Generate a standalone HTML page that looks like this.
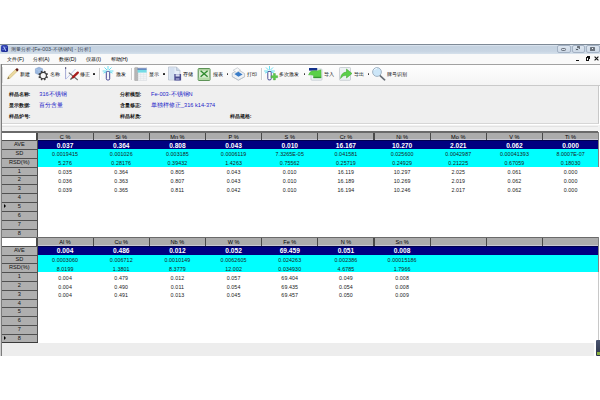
<!DOCTYPE html>
<html><head><meta charset="utf-8">
<style>
html,body{margin:0;padding:0;background:#fff;}
#root{position:relative;width:600px;height:400px;overflow:hidden;background:#fff;font-family:"Liberation Sans",sans-serif;}
.abs{position:absolute;box-sizing:border-box;white-space:nowrap;}
.hdr{background:#acacac;border-bottom:0.8px solid #c8c8d4;}
.ht{text-align:center;font-size:5.6px;color:#000;}
.rh{background:#afafaf;border-top:1px solid #505050;border-right:1.2px solid #505050;text-align:center;font-size:5.6px;color:#111;}
.av{text-align:center;font-size:6.6px;font-weight:bold;color:#fff;}
.dt{text-align:center;font-family:"Liberation Sans",sans-serif;font-size:5.3px;color:#1a1a1a;letter-spacing:0.1px;}
.arrow{width:0;height:0;border-top:2.1px solid transparent;border-bottom:2.1px solid transparent;border-left:2.8px solid #000;}
.menu{font-size:5.3px;color:#000;font-weight:500;}
.tb{font-size:5.3px;color:#000;font-weight:500;}
.lbl{font-size:5.4px;color:#1a1a1a;font-weight:bold;}
.val{font-size:5.6px;color:#2424c8;}
.dd{width:1.8px;height:1.8px;background:#1a1a1a;border-radius:0.4px;}
.sep{width:1.5px;height:12px;background:#cecece;border-right:0.5px solid #fff;}
</style></head><body><div id="root">
<!-- title bar -->
<div class="abs" style="left:0;top:43.7px;width:600px;height:10.3px;background:linear-gradient(#dfe8f2 0%,#c4d2e0 18%,#c8d5e3 70%,#d6e1ec 100%);border-top:1px solid #7e8a96"></div>
<div class="abs" style="left:1.2px;top:45px;width:6.6px;height:6.8px;background:linear-gradient(135deg,#3a4cc0,#18268c);border-radius:1.6px"></div>
<svg class="abs" style="left:1px;top:45px" width="7" height="7" viewBox="0 0 7 7"><path d="M2.6 1.6 L4.8 5.8" stroke="#b4c8ff" stroke-width="1.1" fill="none"/><path d="M1.4 4.6 L2.8 4.6 M4.4 2.2 L5.8 2.2" stroke="#8aa4f0" stroke-width="0.7"/></svg>
<div class="abs" style="left:11px;top:45.6px;font-size:5.3px;color:#3c4654">测量分析-[Fe-003-不锈钢N] - [分析]</div>
<div class="abs" style="left:557px;top:44.6px;width:13.5px;height:8.4px;background:linear-gradient(#dde6f0,#ccd8e6);border:0.8px solid #a4b2c4;border-radius:2px"></div>
<div class="abs" style="left:571.5px;top:44.6px;width:13px;height:8.4px;background:linear-gradient(#dde6f0,#ccd8e6);border:0.8px solid #a4b2c4;border-radius:2px"></div>
<div class="abs" style="left:585.5px;top:44.6px;width:14px;height:8.4px;background:linear-gradient(#dde6f0,#ccd8e6);border:0.8px solid #a4b2c4;border-radius:2px"></div>
<div class="abs" style="left:561px;top:48.3px;width:5.4px;height:2.4px;border:0.8px solid #6c7480;border-radius:1.2px;background:#d8e0ea"></div>
<div class="abs" style="left:576.6px;top:46.2px;width:3.6px;height:3px;background:#6a727c;border-radius:0.5px"></div>
<div class="abs" style="left:575px;top:47.6px;width:3.6px;height:3px;background:#58606a;border:0.6px solid #c8d4e0;border-radius:0.5px"></div>
<div class="abs" style="left:590.2px;top:46.6px;width:4.6px;height:4px;background:#6a727c;border-radius:0.6px"></div>
<div class="abs" style="left:591.8px;top:48px;width:1.4px;height:1.3px;background:#f4f8fc"></div>
<!-- menu bar -->
<div class="abs" style="left:0;top:54px;width:600px;height:10.5px;background:#f9f9f9"></div>
<div class="abs menu" style="left:7.3px;top:56.2px">文件(F)</div>
<div class="abs menu" style="left:32.5px;top:56.2px">分析(A)</div>
<div class="abs menu" style="left:59px;top:56.2px">数据(D)</div>
<div class="abs menu" style="left:86px;top:56.2px">仪器(I)</div>
<div class="abs menu" style="left:110.5px;top:56.2px">帮助(H)</div>
<div class="abs" style="left:576px;top:60px;width:3px;height:1.2px;background:#111"></div>
<div class="abs" style="left:585.5px;top:57.2px;width:3.6px;height:3.6px;border:0.9px solid #111;border-top-width:1.4px"></div>
<div class="abs" style="left:586.8px;top:56px;width:3.6px;height:3px;border-top:1px solid #111;border-right:0.9px solid #111"></div>
<svg class="abs" style="left:593.5px;top:56px" width="5" height="5" viewBox="0 0 5 5"><path d="M0.6 0.6 L4.4 4.4 M4.4 0.6 L0.6 4.4" stroke="#111" stroke-width="1.1"/></svg>
<!-- toolbar -->
<div class="abs" style="left:0;top:64.4px;width:600px;height:21.6px;background:linear-gradient(#fefefe,#f4f4f4);border-top:1.5px solid #a2a2a2;border-bottom:0.9px solid #cacaca"></div>
<div class="abs" style="left:1.6px;top:67px;width:1px;height:16px;border-left:1px solid #dadada"></div>
<svg class="abs" style="left:6px;top:67px" width="13" height="14" viewBox="0 0 13 14">
<path d="M1.5 12 L2.5 9.2 L10.2 1.8 L12 3.6 L4.3 11 Z" fill="#ead9a0" stroke="#c8ac60" stroke-width="0.5"/>
<path d="M9.4 2.6 L10.4 1.5 Q11.3 1 12.3 2 Q12.8 3 12 3.7 L11 4.6 Z" fill="#5e1818"/>
<path d="M1.5 12 L2.2 10 L3.6 11.2 Z" fill="#6a5a40"/></svg>
<div class="abs tb" style="left:20.3px;top:70.5px">新建</div>
<svg class="abs" style="left:34px;top:66px" width="15" height="15" viewBox="0 0 15 15">
<path d="M5 1.2 L8.6 2.8 L8.6 7.2 L5 8.8 L1.4 7.2 L1.4 2.8 Z" fill="#9ab8e0" stroke="#7a98c4" stroke-width="0.5"/>
<path d="M1.4 2.8 L5 4.4 L8.6 2.8 M5 4.4 L5 8.8" stroke="#c8d8f0" stroke-width="0.4" fill="none"/>
<g transform="translate(9.2,9.6)"><g fill="#3a3a3a"><rect x="-0.75" y="-4.9" width="1.5" height="1.9" transform="rotate(22.5)"/><rect x="-0.75" y="-4.9" width="1.5" height="1.9" transform="rotate(67.5)"/><rect x="-0.75" y="-4.9" width="1.5" height="1.9" transform="rotate(112.5)"/><rect x="-0.75" y="-4.9" width="1.5" height="1.9" transform="rotate(157.5)"/><rect x="-0.75" y="-4.9" width="1.5" height="1.9" transform="rotate(202.5)"/><rect x="-0.75" y="-4.9" width="1.5" height="1.9" transform="rotate(247.5)"/><rect x="-0.75" y="-4.9" width="1.5" height="1.9" transform="rotate(292.5)"/><rect x="-0.75" y="-4.9" width="1.5" height="1.9" transform="rotate(337.5)"/></g>
<circle r="3.2" fill="#f8f8f8" stroke="#3a3a3a" stroke-width="1.1"/></g></svg>
<div class="abs tb" style="left:50px;top:70.5px">名称</div>
<svg class="abs" style="left:62px;top:64px" width="20" height="20" viewBox="0 0 20 20">
<path d="M3.6 3.8 L3.6 15.2" stroke="#9aa0d0" stroke-width="0.9"/>
<rect x="3" y="3.2" width="1.2" height="1.6" fill="#505070"/>
<path d="M4 15 L13.5 5" stroke="#b8c0e8" stroke-width="0.9"/>
<path d="M6.8 8.6 L15.8 16" stroke="#6a6a6a" stroke-width="1.1"/>
<path d="M10.8 13.4 L15.8 8.6" stroke="#a81c1c" stroke-width="2.3" stroke-linecap="round"/>
<path d="M8.4 15.6 L10.4 13.8" stroke="#585858" stroke-width="1.3"/></svg>
<div class="abs tb" style="left:80px;top:70.5px">修正</div>
<div class="abs dd" style="left:93px;top:73.4px"></div>
<div class="abs sep" style="left:99px;top:68px"></div>
<svg class="abs" style="left:101px;top:65px" width="14" height="16" viewBox="0 0 14 16"><g stroke="#38d4ee" stroke-width="0.75" stroke-linecap="round"><path d="M7.00 4.40 L7.00 1.40"/><path d="M8.13 4.87 L10.25 2.75"/><path d="M5.87 4.87 L3.75 2.75"/><path d="M8.60 6.00 L12.00 6.00"/><path d="M5.40 6.00 L2.00 6.00"/><path d="M8.45 6.68 L11.17 7.94"/><path d="M5.55 6.68 L2.83 7.94"/></g>
<rect x="5.3" y="6.4" width="3.4" height="8.6" rx="1.3" fill="#f4f4fa" stroke="#34368a" stroke-width="0.9"/></svg>
<div class="abs tb" style="left:116px;top:70.5px">激发</div>
<div class="abs sep" style="left:131px;top:68px"></div>
<svg class="abs" style="left:134px;top:66px" width="14" height="15" viewBox="0 0 14 15">
<rect x="3.2" y="1.6" width="9.6" height="13" fill="#f2f4f6" stroke="#d4d8dc" stroke-width="0.5"/>
<rect x="0.6" y="1.4" width="3.2" height="13.4" rx="0.9" fill="#b6b6b6" stroke="#9a9a9a" stroke-width="0.4"/>
<rect x="3.6" y="2.4" width="9" height="1.4" fill="#3c5ca8"/>
<rect x="3.6" y="3.8" width="9" height="2.8" fill="#74dce6"/>
<g stroke="#dcdfe3" stroke-width="0.4"><path d="M3.6 8.6 H12.6 M3.6 10.6 H12.6 M3.6 12.6 H12.6 M6.6 6.6 V14.4 M9.6 6.6 V14.4"/></g></svg>
<div class="abs tb" style="left:149px;top:70.5px">显示</div>
<div class="abs dd" style="left:162.8px;top:73.4px"></div>
<svg class="abs" style="left:167px;top:66px" width="15" height="15" viewBox="0 0 15 15">
<path d="M1.5 1 L9.5 1 L13 4.5 L13 14 L1.5 14 Z" fill="#e6eef8" stroke="#a8b4c4" stroke-width="0.6"/>
<path d="M9.5 1 L9.5 4.5 L13 4.5" fill="#c8d4e4" stroke="#a8b4c4" stroke-width="0.5"/>
<rect x="2.5" y="2" width="5" height="11" fill="#d4e0f0"/>
<rect x="7.3" y="8" width="6.8" height="6.5" fill="#4a4c90"/>
<rect x="8.6" y="8.2" width="4" height="2.3" fill="#d8dcf0"/>
<rect x="8.8" y="12" width="3.6" height="2.4" fill="#8a8cc0"/></svg>
<div class="abs tb" style="left:183px;top:70.5px">存储</div>
<svg class="abs" style="left:197px;top:67px" width="14" height="15" viewBox="0 0 14 15">
<rect x="1.2" y="1.6" width="11.8" height="11.8" rx="0.6" fill="#d8ecd0" stroke="#3c7c34" stroke-width="0.9"/>
<rect x="1.7" y="2.1" width="10.8" height="1.4" fill="#a8d098"/>
<rect x="1.7" y="10.6" width="10.8" height="2.3" fill="#b4dca8"/>
<path d="M3.6 3.8 L10.6 9.8 M10.6 3.8 L3.6 9.8" stroke="#2e8a2e" stroke-width="1.4"/></svg>
<div class="abs tb" style="left:213px;top:70.5px">报表</div>
<div class="abs dd" style="left:226.5px;top:73.4px"></div>
<svg class="abs" style="left:228px;top:64px" width="20" height="20" viewBox="0 0 20 20">
<path d="M4.2 9.2 L10.4 5.8 L16.6 9.6 L16.6 12.8 L10.4 16.2 L4.2 12.6 Z" fill="#eef1f4" stroke="#9aa6b2" stroke-width="0.6"/>
<path d="M5.2 6.2 L9.4 3.8 L12.6 6.2 L8.4 8.6 Z" fill="#fafafa" stroke="#a4aeb8" stroke-width="0.5"/>
<path d="M6.4 10 L10.4 7.8 L14.6 10.4 L10.4 12.8 Z" fill="#3a7cc8"/>
<path d="M4.2 12.6 L10.4 16.2 L16.6 12.8" fill="none" stroke="#b8c0c8" stroke-width="0.6"/></svg>
<div class="abs tb" style="left:247px;top:70.5px">打印</div>
<div class="abs sep" style="left:261px;top:68px"></div>
<svg class="abs" style="left:263px;top:65px" width="16" height="16" viewBox="0 0 16 16"><g stroke="#38d4ee" stroke-width="0.75" stroke-linecap="round"><path d="M6.50 4.40 L6.50 1.40"/><path d="M7.63 4.87 L9.75 2.75"/><path d="M5.37 4.87 L3.25 2.75"/><path d="M8.10 6.00 L11.50 6.00"/><path d="M4.90 6.00 L1.50 6.00"/><path d="M7.95 6.68 L10.67 7.94"/><path d="M5.05 6.68 L2.33 7.94"/></g>
<rect x="4.8" y="6.4" width="3.4" height="8.5" rx="1.2" fill="#fff" stroke="#3a3c8a" stroke-width="0.9"/>
<path d="M10.4 8.5 H12.4 V10.7 H14.6 V12.7 H12.4 V14.9 H10.4 V12.7 H8.2 V10.7 H10.4 Z" fill="#5ccc4a" stroke="#3a9a30" stroke-width="0.4"/></svg>
<div class="abs tb" style="left:279px;top:70.5px">多次激发</div>
<div class="abs dd" style="left:303.5px;top:73.4px"></div>
<svg class="abs" style="left:304px;top:64px" width="20" height="18" viewBox="0 0 20 18">
<rect x="7" y="5" width="11" height="11.2" rx="0.8" fill="#eef2f6" stroke="#b4bcc6" stroke-width="0.6"/>
<rect x="5" y="4" width="8.2" height="2.6" fill="#12308a"/>
<path d="M4.5 11 Q5.5 7 9.5 6.8 L13.5 6.8 L17 5.8 L17.2 14 L9.5 14 L9.5 11.4 Q7 10.6 4.5 11 Z" fill="#5ad048" stroke="#48b038" stroke-width="0.4"/>
<path d="M9.5 13.3 L16.8 13.3" stroke="#2e8a2e" stroke-width="1"/></svg>
<div class="abs tb" style="left:323.5px;top:70.5px">导入</div>
<svg class="abs" style="left:338px;top:66px" width="15" height="15" viewBox="0 0 15 15">
<rect x="1.5" y="1.5" width="11" height="12.8" rx="0.8" fill="#eef2f4" stroke="#b0b8c0" stroke-width="0.6"/>
<path d="M2.5 12.5 Q3 6.5 8.5 6 L8.5 3 L14 7.5 L8.5 12 L8.5 9.2 Q5 9 2.5 12.5 Z" fill="#5cd04a" stroke="#3aa02a" stroke-width="0.5"/></svg>
<div class="abs tb" style="left:354px;top:70.5px">导出</div>
<div class="abs dd" style="left:367.5px;top:73.4px"></div>
<svg class="abs" style="left:371px;top:66px" width="15" height="15" viewBox="0 0 15 15">
<path d="M9 9.6 L13.6 13.8" stroke="#6a7078" stroke-width="1.7" stroke-linecap="round"/>
<circle cx="6" cy="6" r="4.4" fill="#cce6f8" stroke="#98acbc" stroke-width="0.9"/>
<path d="M3.2 4.2 Q4.2 2.4 6.2 2.2" stroke="#fff" stroke-width="0.8" fill="none"/></svg>
<div class="abs tb" style="left:387px;top:70.5px">牌号识别</div>
<!-- info panel -->
<div class="abs" style="left:0;top:86px;width:599.2px;height:37.5px;background:#efefef;border-bottom:1px solid #d6d6d6;border-right:0.8px solid #c8c8c8"></div>
<div class="abs lbl" style="left:8.5px;top:91.2px">样品名称:</div>
<div class="abs val" style="left:39.3px;top:91px">316不锈钢</div>
<div class="abs lbl" style="left:8.5px;top:102.2px">显示数据:</div>
<div class="abs val" style="left:39.3px;top:102px">百分含量</div>
<div class="abs lbl" style="left:8.5px;top:113.2px">样品炉号:</div>
<div class="abs lbl" style="left:119.5px;top:91.2px">分析模型:</div>
<div class="abs val" style="left:151px;top:91px">Fe-003-不锈钢N</div>
<div class="abs lbl" style="left:119.5px;top:102.2px">含量修正:</div>
<div class="abs val" style="left:151px;top:102px">单独样修正_316 k14-374</div>
<div class="abs lbl" style="left:119.5px;top:113.2px">样品材质:</div>
<div class="abs lbl" style="left:229.7px;top:113.2px">样品规格:</div>
<!-- strip between panel and grid -->
<div class="abs" style="left:0;top:123.5px;width:600px;height:8px;background:#f2f2f2;border-top:1.2px solid #fff;border-bottom:1px solid #fafafa"></div>
<div class="abs" style="left:2px;top:126.2px;width:596px;height:1px;background:#e2e2e2"></div>
<div class="abs" style="left:2.0px;top:132.0px;width:596.0px;height:105.45999999999998px;background:#fff"></div>
<div class="abs hdr" style="left:37.0px;top:132.0px;width:561.0px;height:8.0px"></div>
<div class="abs" style="left:2.0px;top:132.0px;width:35.0px;height:8.0px;background:#fff"></div>
<div class="abs" style="left:36.40px;top:132.0px;width:1.2px;height:8.0px;background:#4a4a4a"></div>
<div class="abs ht" style="left:37.00px;top:132.6px;width:56.17px;height:8.0px;line-height:8.0px">C %</div>
<div class="abs" style="left:92.57px;top:132.0px;width:1.2px;height:8.0px;background:#4a4a4a"></div>
<div class="abs ht" style="left:93.17px;top:132.6px;width:56.17px;height:8.0px;line-height:8.0px">Si %</div>
<div class="abs" style="left:148.74px;top:132.0px;width:1.2px;height:8.0px;background:#4a4a4a"></div>
<div class="abs ht" style="left:149.34px;top:132.6px;width:56.17px;height:8.0px;line-height:8.0px">Mn %</div>
<div class="abs" style="left:204.91px;top:132.0px;width:1.2px;height:8.0px;background:#4a4a4a"></div>
<div class="abs ht" style="left:205.51px;top:132.6px;width:56.17px;height:8.0px;line-height:8.0px">P %</div>
<div class="abs" style="left:261.08px;top:132.0px;width:1.2px;height:8.0px;background:#4a4a4a"></div>
<div class="abs ht" style="left:261.68px;top:132.6px;width:56.17px;height:8.0px;line-height:8.0px">S %</div>
<div class="abs" style="left:317.25px;top:132.0px;width:1.2px;height:8.0px;background:#4a4a4a"></div>
<div class="abs ht" style="left:317.85px;top:132.6px;width:56.17px;height:8.0px;line-height:8.0px">Cr %</div>
<div class="abs" style="left:373.42px;top:132.0px;width:1.2px;height:8.0px;background:#4a4a4a"></div>
<div class="abs ht" style="left:374.02px;top:132.6px;width:56.17px;height:8.0px;line-height:8.0px">Ni %</div>
<div class="abs" style="left:429.59px;top:132.0px;width:1.2px;height:8.0px;background:#4a4a4a"></div>
<div class="abs ht" style="left:430.19px;top:132.6px;width:56.17px;height:8.0px;line-height:8.0px">Mo %</div>
<div class="abs" style="left:485.76px;top:132.0px;width:1.2px;height:8.0px;background:#4a4a4a"></div>
<div class="abs ht" style="left:486.36px;top:132.6px;width:56.17px;height:8.0px;line-height:8.0px">V %</div>
<div class="abs" style="left:541.93px;top:132.0px;width:1.2px;height:8.0px;background:#4a4a4a"></div>
<div class="abs ht" style="left:542.53px;top:132.6px;width:56.17px;height:8.0px;line-height:8.0px">Ti %</div>
<div class="abs" style="left:2.0px;top:131.4px;width:596.0px;height:1.2px;background:#6a6a6a"></div>
<div class="abs" style="left:597.5px;top:132.0px;width:1px;height:34.58px;background:#808080"></div>
<div class="abs" style="left:37.0px;top:140.0px;width:561.0px;height:8.86px;background:#000080;border-top:0.6px solid #000050"></div>
<div class="abs" style="left:37.0px;top:148.86px;width:561.0px;height:17.72px;background:#00ffff"></div>
<div class="abs rh" style="left:2.0px;top:140.00px;width:35.6px;height:9.459999999999999px;line-height:7.66px">AVE</div>
<div class="abs rh" style="left:2.0px;top:148.86px;width:35.6px;height:9.459999999999999px;line-height:7.66px">SD</div>
<div class="abs rh" style="left:2.0px;top:157.72px;width:35.6px;height:9.459999999999999px;line-height:7.66px">RSD(%)</div>
<div class="abs rh" style="left:2.0px;top:166.58px;width:35.6px;height:9.459999999999999px;line-height:7.66px">1</div>
<div class="abs rh" style="left:2.0px;top:175.44px;width:35.6px;height:9.459999999999999px;line-height:7.66px">2</div>
<div class="abs rh" style="left:2.0px;top:184.30px;width:35.6px;height:9.459999999999999px;line-height:7.66px">3</div>
<div class="abs rh" style="left:2.0px;top:193.16px;width:35.6px;height:9.459999999999999px;line-height:7.66px">4</div>
<div class="abs rh" style="left:2.0px;top:202.02px;width:35.6px;height:9.459999999999999px;line-height:7.66px">5</div>
<div class="abs arrow" style="left:3.5px;top:204.32px"></div>
<div class="abs rh" style="left:2.0px;top:210.88px;width:35.6px;height:9.459999999999999px;line-height:7.66px">6</div>
<div class="abs rh" style="left:2.0px;top:219.74px;width:35.6px;height:9.459999999999999px;line-height:7.66px">7</div>
<div class="abs rh" style="left:2.0px;top:228.60px;width:35.6px;height:9.459999999999999px;line-height:7.66px">8</div>
<div class="abs" style="left:2.0px;top:236.86px;width:35.6px;height:1.2px;background:#3a3a3a"></div>
<div class="abs av" style="left:37.00px;top:141.60px;width:56.17px;height:8.86px;line-height:8.86px">0.037</div>
<div class="abs dt" style="left:37.00px;top:150.46px;width:56.17px;height:8.86px;line-height:8.86px">0.0019415</div>
<div class="abs dt" style="left:37.00px;top:159.32px;width:56.17px;height:8.86px;line-height:8.86px">5.276</div>
<div class="abs dt" style="left:37.00px;top:168.18px;width:56.17px;height:8.86px;line-height:8.86px">0.035</div>
<div class="abs dt" style="left:37.00px;top:177.04px;width:56.17px;height:8.86px;line-height:8.86px">0.036</div>
<div class="abs dt" style="left:37.00px;top:185.90px;width:56.17px;height:8.86px;line-height:8.86px">0.039</div>
<div class="abs av" style="left:93.17px;top:141.60px;width:56.17px;height:8.86px;line-height:8.86px">0.364</div>
<div class="abs dt" style="left:93.17px;top:150.46px;width:56.17px;height:8.86px;line-height:8.86px">0.001026</div>
<div class="abs dt" style="left:93.17px;top:159.32px;width:56.17px;height:8.86px;line-height:8.86px">0.28176</div>
<div class="abs dt" style="left:93.17px;top:168.18px;width:56.17px;height:8.86px;line-height:8.86px">0.364</div>
<div class="abs dt" style="left:93.17px;top:177.04px;width:56.17px;height:8.86px;line-height:8.86px">0.363</div>
<div class="abs dt" style="left:93.17px;top:185.90px;width:56.17px;height:8.86px;line-height:8.86px">0.365</div>
<div class="abs av" style="left:149.34px;top:141.60px;width:56.17px;height:8.86px;line-height:8.86px">0.808</div>
<div class="abs dt" style="left:149.34px;top:150.46px;width:56.17px;height:8.86px;line-height:8.86px">0.003185</div>
<div class="abs dt" style="left:149.34px;top:159.32px;width:56.17px;height:8.86px;line-height:8.86px">0.39432</div>
<div class="abs dt" style="left:149.34px;top:168.18px;width:56.17px;height:8.86px;line-height:8.86px">0.805</div>
<div class="abs dt" style="left:149.34px;top:177.04px;width:56.17px;height:8.86px;line-height:8.86px">0.807</div>
<div class="abs dt" style="left:149.34px;top:185.90px;width:56.17px;height:8.86px;line-height:8.86px">0.811</div>
<div class="abs av" style="left:205.51px;top:141.60px;width:56.17px;height:8.86px;line-height:8.86px">0.043</div>
<div class="abs dt" style="left:205.51px;top:150.46px;width:56.17px;height:8.86px;line-height:8.86px">0.0006119</div>
<div class="abs dt" style="left:205.51px;top:159.32px;width:56.17px;height:8.86px;line-height:8.86px">1.4263</div>
<div class="abs dt" style="left:205.51px;top:168.18px;width:56.17px;height:8.86px;line-height:8.86px">0.043</div>
<div class="abs dt" style="left:205.51px;top:177.04px;width:56.17px;height:8.86px;line-height:8.86px">0.043</div>
<div class="abs dt" style="left:205.51px;top:185.90px;width:56.17px;height:8.86px;line-height:8.86px">0.042</div>
<div class="abs av" style="left:261.68px;top:141.60px;width:56.17px;height:8.86px;line-height:8.86px">0.010</div>
<div class="abs dt" style="left:261.68px;top:150.46px;width:56.17px;height:8.86px;line-height:8.86px">7.3265E-05</div>
<div class="abs dt" style="left:261.68px;top:159.32px;width:56.17px;height:8.86px;line-height:8.86px">0.75562</div>
<div class="abs dt" style="left:261.68px;top:168.18px;width:56.17px;height:8.86px;line-height:8.86px">0.010</div>
<div class="abs dt" style="left:261.68px;top:177.04px;width:56.17px;height:8.86px;line-height:8.86px">0.010</div>
<div class="abs dt" style="left:261.68px;top:185.90px;width:56.17px;height:8.86px;line-height:8.86px">0.010</div>
<div class="abs av" style="left:317.85px;top:141.60px;width:56.17px;height:8.86px;line-height:8.86px">16.167</div>
<div class="abs dt" style="left:317.85px;top:150.46px;width:56.17px;height:8.86px;line-height:8.86px">0.041581</div>
<div class="abs dt" style="left:317.85px;top:159.32px;width:56.17px;height:8.86px;line-height:8.86px">0.25719</div>
<div class="abs dt" style="left:317.85px;top:168.18px;width:56.17px;height:8.86px;line-height:8.86px">16.119</div>
<div class="abs dt" style="left:317.85px;top:177.04px;width:56.17px;height:8.86px;line-height:8.86px">16.189</div>
<div class="abs dt" style="left:317.85px;top:185.90px;width:56.17px;height:8.86px;line-height:8.86px">16.194</div>
<div class="abs av" style="left:374.02px;top:141.60px;width:56.17px;height:8.86px;line-height:8.86px">10.270</div>
<div class="abs dt" style="left:374.02px;top:150.46px;width:56.17px;height:8.86px;line-height:8.86px">0.025600</div>
<div class="abs dt" style="left:374.02px;top:159.32px;width:56.17px;height:8.86px;line-height:8.86px">0.24929</div>
<div class="abs dt" style="left:374.02px;top:168.18px;width:56.17px;height:8.86px;line-height:8.86px">10.297</div>
<div class="abs dt" style="left:374.02px;top:177.04px;width:56.17px;height:8.86px;line-height:8.86px">10.269</div>
<div class="abs dt" style="left:374.02px;top:185.90px;width:56.17px;height:8.86px;line-height:8.86px">10.246</div>
<div class="abs av" style="left:430.19px;top:141.60px;width:56.17px;height:8.86px;line-height:8.86px">2.021</div>
<div class="abs dt" style="left:430.19px;top:150.46px;width:56.17px;height:8.86px;line-height:8.86px">0.0042987</div>
<div class="abs dt" style="left:430.19px;top:159.32px;width:56.17px;height:8.86px;line-height:8.86px">0.21225</div>
<div class="abs dt" style="left:430.19px;top:168.18px;width:56.17px;height:8.86px;line-height:8.86px">2.025</div>
<div class="abs dt" style="left:430.19px;top:177.04px;width:56.17px;height:8.86px;line-height:8.86px">2.019</div>
<div class="abs dt" style="left:430.19px;top:185.90px;width:56.17px;height:8.86px;line-height:8.86px">2.017</div>
<div class="abs av" style="left:486.36px;top:141.60px;width:56.17px;height:8.86px;line-height:8.86px">0.062</div>
<div class="abs dt" style="left:486.36px;top:150.46px;width:56.17px;height:8.86px;line-height:8.86px">0.00041393</div>
<div class="abs dt" style="left:486.36px;top:159.32px;width:56.17px;height:8.86px;line-height:8.86px">0.67059</div>
<div class="abs dt" style="left:486.36px;top:168.18px;width:56.17px;height:8.86px;line-height:8.86px">0.061</div>
<div class="abs dt" style="left:486.36px;top:177.04px;width:56.17px;height:8.86px;line-height:8.86px">0.062</div>
<div class="abs dt" style="left:486.36px;top:185.90px;width:56.17px;height:8.86px;line-height:8.86px">0.062</div>
<div class="abs av" style="left:542.53px;top:141.60px;width:56.17px;height:8.86px;line-height:8.86px">0.000</div>
<div class="abs dt" style="left:542.53px;top:150.46px;width:56.17px;height:8.86px;line-height:8.86px">8.0007E-07</div>
<div class="abs dt" style="left:542.53px;top:159.32px;width:56.17px;height:8.86px;line-height:8.86px">0.18030</div>
<div class="abs dt" style="left:542.53px;top:168.18px;width:56.17px;height:8.86px;line-height:8.86px">0.000</div>
<div class="abs dt" style="left:542.53px;top:177.04px;width:56.17px;height:8.86px;line-height:8.86px">0.000</div>
<div class="abs dt" style="left:542.53px;top:185.90px;width:56.17px;height:8.86px;line-height:8.86px">0.000</div>
<div class="abs" style="left:2.0px;top:237.45999999999998px;width:596.0px;height:105.05000000000001px;background:#fff"></div>
<div class="abs hdr" style="left:37.0px;top:237.45999999999998px;width:561.0px;height:8.25px"></div>
<div class="abs" style="left:2.0px;top:237.45999999999998px;width:35.0px;height:8.25px;background:#fff"></div>
<div class="abs" style="left:36.40px;top:237.45999999999998px;width:1.2px;height:8.25px;background:#4a4a4a"></div>
<div class="abs ht" style="left:37.00px;top:238.05999999999997px;width:56.17px;height:8.25px;line-height:8.25px">Al %</div>
<div class="abs" style="left:92.57px;top:237.45999999999998px;width:1.2px;height:8.25px;background:#4a4a4a"></div>
<div class="abs ht" style="left:93.17px;top:238.05999999999997px;width:56.17px;height:8.25px;line-height:8.25px">Cu %</div>
<div class="abs" style="left:148.74px;top:237.45999999999998px;width:1.2px;height:8.25px;background:#4a4a4a"></div>
<div class="abs ht" style="left:149.34px;top:238.05999999999997px;width:56.17px;height:8.25px;line-height:8.25px">Nb %</div>
<div class="abs" style="left:204.91px;top:237.45999999999998px;width:1.2px;height:8.25px;background:#4a4a4a"></div>
<div class="abs ht" style="left:205.51px;top:238.05999999999997px;width:56.17px;height:8.25px;line-height:8.25px">W %</div>
<div class="abs" style="left:261.08px;top:237.45999999999998px;width:1.2px;height:8.25px;background:#4a4a4a"></div>
<div class="abs ht" style="left:261.68px;top:238.05999999999997px;width:56.17px;height:8.25px;line-height:8.25px">Fe %</div>
<div class="abs" style="left:317.25px;top:237.45999999999998px;width:1.2px;height:8.25px;background:#4a4a4a"></div>
<div class="abs ht" style="left:317.85px;top:238.05999999999997px;width:56.17px;height:8.25px;line-height:8.25px">N %</div>
<div class="abs" style="left:373.42px;top:237.45999999999998px;width:1.2px;height:8.25px;background:#4a4a4a"></div>
<div class="abs ht" style="left:374.02px;top:238.05999999999997px;width:56.17px;height:8.25px;line-height:8.25px">Sn %</div>
<div class="abs" style="left:429.59px;top:237.45999999999998px;width:1.2px;height:8.25px;background:#4a4a4a"></div>
<div class="abs" style="left:485.76px;top:237.45999999999998px;width:1.2px;height:8.25px;background:#4a4a4a"></div>
<div class="abs" style="left:541.93px;top:237.45999999999998px;width:1.2px;height:8.25px;background:#4a4a4a"></div>
<div class="abs" style="left:2.0px;top:236.85999999999999px;width:596.0px;height:1.2px;background:#6a6a6a"></div>
<div class="abs" style="left:597.5px;top:237.45999999999998px;width:1px;height:34.650000000000006px;background:#808080"></div>
<div class="abs" style="left:37.0px;top:245.70999999999998px;width:561.0px;height:8.8px;background:#000080;border-top:0.6px solid #000050"></div>
<div class="abs" style="left:37.0px;top:254.51px;width:561.0px;height:17.6px;background:#00ffff"></div>
<div class="abs rh" style="left:2.0px;top:245.71px;width:35.6px;height:9.4px;line-height:7.60px">AVE</div>
<div class="abs rh" style="left:2.0px;top:254.51px;width:35.6px;height:9.4px;line-height:7.60px">SD</div>
<div class="abs rh" style="left:2.0px;top:263.31px;width:35.6px;height:9.4px;line-height:7.60px">RSD(%)</div>
<div class="abs rh" style="left:2.0px;top:272.11px;width:35.6px;height:9.4px;line-height:7.60px">1</div>
<div class="abs rh" style="left:2.0px;top:280.91px;width:35.6px;height:9.4px;line-height:7.60px">2</div>
<div class="abs rh" style="left:2.0px;top:289.71px;width:35.6px;height:9.4px;line-height:7.60px">3</div>
<div class="abs rh" style="left:2.0px;top:298.51px;width:35.6px;height:9.4px;line-height:7.60px">4</div>
<div class="abs rh" style="left:2.0px;top:307.31px;width:35.6px;height:9.4px;line-height:7.60px">5</div>
<div class="abs rh" style="left:2.0px;top:316.11px;width:35.6px;height:9.4px;line-height:7.60px">6</div>
<div class="abs rh" style="left:2.0px;top:324.91px;width:35.6px;height:9.4px;line-height:7.60px">7</div>
<div class="abs rh" style="left:2.0px;top:333.71px;width:35.6px;height:9.4px;line-height:7.60px">8</div>
<div class="abs arrow" style="left:3.5px;top:336.01px"></div>
<div class="abs" style="left:2.0px;top:341.91px;width:35.6px;height:1.2px;background:#3a3a3a"></div>
<div class="abs av" style="left:37.00px;top:247.31px;width:56.17px;height:8.8px;line-height:8.8px">0.004</div>
<div class="abs dt" style="left:37.00px;top:256.11px;width:56.17px;height:8.8px;line-height:8.8px">0.0003060</div>
<div class="abs dt" style="left:37.00px;top:264.91px;width:56.17px;height:8.8px;line-height:8.8px">8.0199</div>
<div class="abs dt" style="left:37.00px;top:273.71px;width:56.17px;height:8.8px;line-height:8.8px">0.004</div>
<div class="abs dt" style="left:37.00px;top:282.51px;width:56.17px;height:8.8px;line-height:8.8px">0.004</div>
<div class="abs dt" style="left:37.00px;top:291.31px;width:56.17px;height:8.8px;line-height:8.8px">0.004</div>
<div class="abs av" style="left:93.17px;top:247.31px;width:56.17px;height:8.8px;line-height:8.8px">0.486</div>
<div class="abs dt" style="left:93.17px;top:256.11px;width:56.17px;height:8.8px;line-height:8.8px">0.006712</div>
<div class="abs dt" style="left:93.17px;top:264.91px;width:56.17px;height:8.8px;line-height:8.8px">1.3801</div>
<div class="abs dt" style="left:93.17px;top:273.71px;width:56.17px;height:8.8px;line-height:8.8px">0.479</div>
<div class="abs dt" style="left:93.17px;top:282.51px;width:56.17px;height:8.8px;line-height:8.8px">0.490</div>
<div class="abs dt" style="left:93.17px;top:291.31px;width:56.17px;height:8.8px;line-height:8.8px">0.491</div>
<div class="abs av" style="left:149.34px;top:247.31px;width:56.17px;height:8.8px;line-height:8.8px">0.012</div>
<div class="abs dt" style="left:149.34px;top:256.11px;width:56.17px;height:8.8px;line-height:8.8px">0.0010149</div>
<div class="abs dt" style="left:149.34px;top:264.91px;width:56.17px;height:8.8px;line-height:8.8px">8.3779</div>
<div class="abs dt" style="left:149.34px;top:273.71px;width:56.17px;height:8.8px;line-height:8.8px">0.012</div>
<div class="abs dt" style="left:149.34px;top:282.51px;width:56.17px;height:8.8px;line-height:8.8px">0.011</div>
<div class="abs dt" style="left:149.34px;top:291.31px;width:56.17px;height:8.8px;line-height:8.8px">0.013</div>
<div class="abs av" style="left:205.51px;top:247.31px;width:56.17px;height:8.8px;line-height:8.8px">0.052</div>
<div class="abs dt" style="left:205.51px;top:256.11px;width:56.17px;height:8.8px;line-height:8.8px">0.0062605</div>
<div class="abs dt" style="left:205.51px;top:264.91px;width:56.17px;height:8.8px;line-height:8.8px">12.002</div>
<div class="abs dt" style="left:205.51px;top:273.71px;width:56.17px;height:8.8px;line-height:8.8px">0.057</div>
<div class="abs dt" style="left:205.51px;top:282.51px;width:56.17px;height:8.8px;line-height:8.8px">0.054</div>
<div class="abs dt" style="left:205.51px;top:291.31px;width:56.17px;height:8.8px;line-height:8.8px">0.045</div>
<div class="abs av" style="left:261.68px;top:247.31px;width:56.17px;height:8.8px;line-height:8.8px">69.459</div>
<div class="abs dt" style="left:261.68px;top:256.11px;width:56.17px;height:8.8px;line-height:8.8px">0.024263</div>
<div class="abs dt" style="left:261.68px;top:264.91px;width:56.17px;height:8.8px;line-height:8.8px">0.034930</div>
<div class="abs dt" style="left:261.68px;top:273.71px;width:56.17px;height:8.8px;line-height:8.8px">69.404</div>
<div class="abs dt" style="left:261.68px;top:282.51px;width:56.17px;height:8.8px;line-height:8.8px">69.435</div>
<div class="abs dt" style="left:261.68px;top:291.31px;width:56.17px;height:8.8px;line-height:8.8px">69.457</div>
<div class="abs av" style="left:317.85px;top:247.31px;width:56.17px;height:8.8px;line-height:8.8px">0.051</div>
<div class="abs dt" style="left:317.85px;top:256.11px;width:56.17px;height:8.8px;line-height:8.8px">0.002386</div>
<div class="abs dt" style="left:317.85px;top:264.91px;width:56.17px;height:8.8px;line-height:8.8px">4.6785</div>
<div class="abs dt" style="left:317.85px;top:273.71px;width:56.17px;height:8.8px;line-height:8.8px">0.049</div>
<div class="abs dt" style="left:317.85px;top:282.51px;width:56.17px;height:8.8px;line-height:8.8px">0.054</div>
<div class="abs dt" style="left:317.85px;top:291.31px;width:56.17px;height:8.8px;line-height:8.8px">0.050</div>
<div class="abs av" style="left:374.02px;top:247.31px;width:56.17px;height:8.8px;line-height:8.8px">0.008</div>
<div class="abs dt" style="left:374.02px;top:256.11px;width:56.17px;height:8.8px;line-height:8.8px">0.00015186</div>
<div class="abs dt" style="left:374.02px;top:264.91px;width:56.17px;height:8.8px;line-height:8.8px">1.7966</div>
<div class="abs dt" style="left:374.02px;top:273.71px;width:56.17px;height:8.8px;line-height:8.8px">0.008</div>
<div class="abs dt" style="left:374.02px;top:282.51px;width:56.17px;height:8.8px;line-height:8.8px">0.008</div>
<div class="abs dt" style="left:374.02px;top:291.31px;width:56.17px;height:8.8px;line-height:8.8px">0.009</div>
<!-- bottom strip -->
<div class="abs" style="left:2px;top:342.51px;width:592px;height:13.49px;background:#ededed"></div>
<!-- left border -->
<div class="abs" style="left:0;top:64px;width:0.8px;height:292px;background:#d0d0d0"></div>
<div class="abs" style="left:0.8px;top:64px;width:1.2px;height:292px;background:#7c7c7c"></div>
<div class="abs" style="left:598px;top:272.11px;width:1px;height:69.89px;background:#c8c8c8"></div>
<div class="abs" style="left:596px;top:339.5px;width:4px;height:16.5px;background:linear-gradient(#4a5470,#2c3448);border-radius:1px 0 0 1px"></div>
<div class="abs" style="left:597px;top:352px;width:3px;height:3px;background:#8ab040"></div>
</div></body></html>
